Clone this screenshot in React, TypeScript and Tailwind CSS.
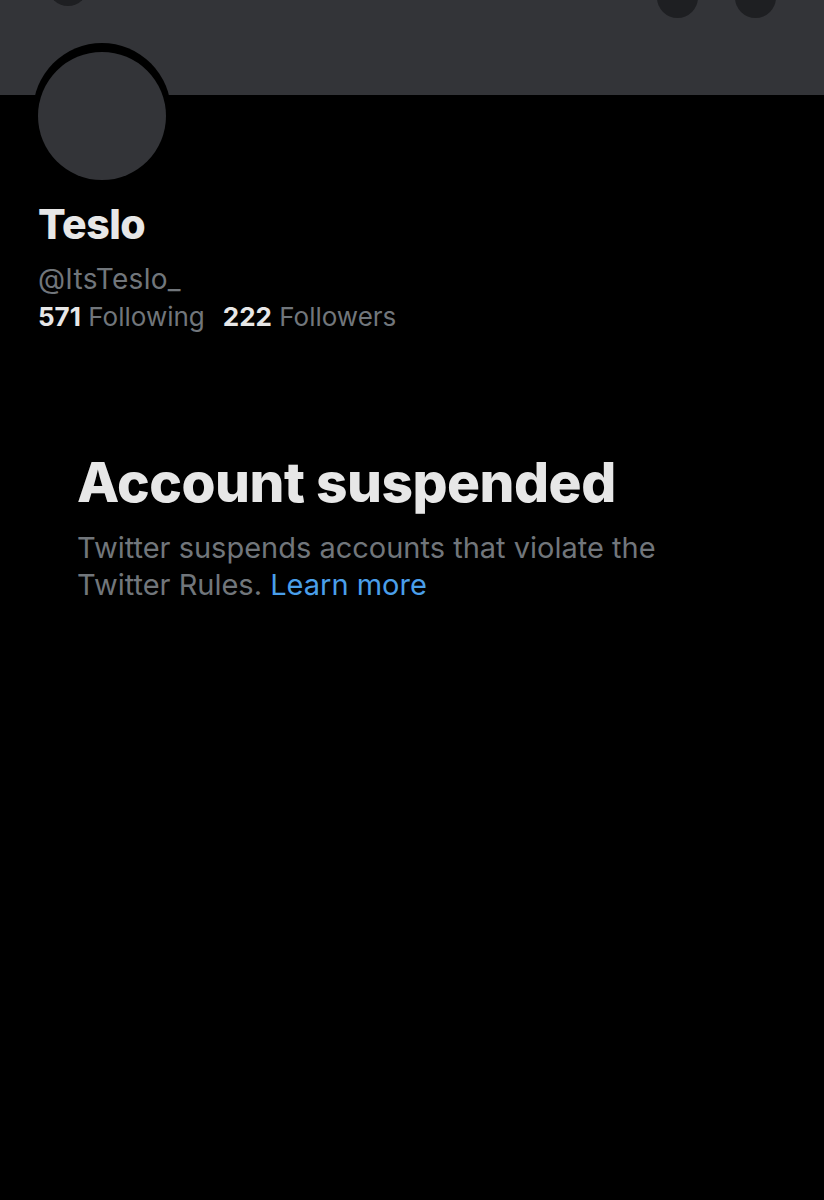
import React from 'react';

const font = { fontFamily: 'Inter, "Liberation Sans", sans-serif' };

export default function App() {
  return (
    <div className="w-[824px] h-[1200px] bg-black overflow-hidden" style={font}>
      {/* Banner */}
      <div className="relative h-[95px] bg-[#333438]">
        <div className="absolute left-[48px] top-[-34px] w-[40px] h-[40px] rounded-full bg-[#1e1f22]" />
        <div className="absolute left-[657px] top-[-23px] w-[41px] h-[41px] rounded-full bg-[#1e1f22]" />
        <div className="absolute left-[735px] top-[-23px] w-[41px] h-[41px] rounded-full bg-[#1e1f22]" />
      </div>

      {/* Avatar + profile */}
      <div className="px-[33px]">
        <div className="relative z-10 -mt-[52px] w-[138px] h-[141px] rounded-full bg-black pt-[9px] px-[5px] pb-[4px]">
          <div className="w-full h-full rounded-full bg-[#333438]" />
        </div>
        <div className="pl-[5px] mt-[16px]">
          <div className="text-[41px] leading-[48px] font-extrabold text-[#e7e7e7] tracking-[-0.5px]">Teslo</div>
          <div className="text-[28px] leading-[40px] text-[#71767b] mt-[11px] tracking-[0.3px]">@ItsTeslo_</div>
          <div className="text-[26px] leading-[36px] flex gap-[18px]">
            <span>
              <span className="font-bold text-[#e7e7e7]">571</span>
              <span className="text-[#71767b]"> Following</span>
            </span>
            <span>
              <span className="font-bold text-[#e7e7e7]">222</span>
              <span className="text-[#71767b]"> Followers</span>
            </span>
          </div>
        </div>
      </div>

      {/* Suspended notice */}
      <div className="px-[77px] pt-[115px]">
        <h1 className="text-[55px] leading-[64px] font-extrabold text-[#e7e7e7] tracking-[-0.5px]">Account suspended</h1>
        <p className="mt-[15px] text-[29px] leading-[37px] text-[#71767b] w-[640px]">
          Twitter suspends accounts that violate the Twitter Rules.{' '}
          <span className="text-[#4a9fea]">Learn more</span>
        </p>
      </div>
    </div>
  );
}
